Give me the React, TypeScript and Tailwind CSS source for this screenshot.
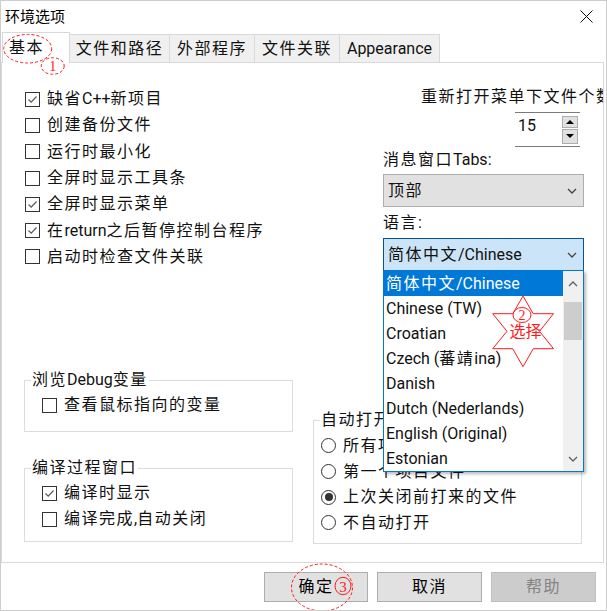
import type { FC, ReactNode } from 'react';

const CJK = /([\u2E80-\u9FFF\uF900-\uFAFF\uFF00-\uFFEF]+)/;

// CJK runs get a little extra spacing, Latin runs stay as they are
const T: FC<{ s: string }> = ({ s }) => (
  <span>
    {s.split(CJK).map((p, i) =>
      CJK.test(p) ? (
        <span key={i} className="tracking-[1.5px]">
          {p}
        </span>
      ) : (
        p
      ),
    )}
  </span>
);

const Check: FC<{ checked?: boolean }> = ({ checked }) => (
  <span className="w-[15px] h-[15px] shrink-0 border border-[#333] bg-white flex items-center justify-center">
    {checked && (
      <svg width="11" height="11" viewBox="0 0 11 11">
        <path d="M1.5 5.5 L4.2 8.2 L9.5 2.5" fill="none" stroke="#5a5a5a" strokeWidth="1.2" />
      </svg>
    )}
  </span>
);

const CheckRow: FC<{ label: string; checked?: boolean; h?: string }> = ({ label, checked, h = 'h-[26.3px]' }) => (
  <div className={`flex items-center gap-[7px] whitespace-nowrap ${h}`}>
    <Check checked={checked} />
    <T s={label} />
  </div>
);

const RadioRow: FC<{ label: string; checked?: boolean }> = ({ label, checked }) => (
  <div className="flex items-center gap-[7px] h-[25.7px] whitespace-nowrap">
    <span className="w-[15px] h-[15px] shrink-0 rounded-full border border-[#333] bg-white flex items-center justify-center">
      {checked && <span className="w-[8px] h-[8px] rounded-full bg-[#333]" />}
    </span>
    <T s={label} />
  </div>
);

const Chevron: FC<{ up?: boolean; color?: string }> = ({ up, color = '#444' }) => (
  <svg width="10" height="6" viewBox="0 0 10 6">
    <path d={up ? 'M1 5 L5 1 L9 5' : 'M1 1 L5 5 L9 1'} fill="none" stroke={color} strokeWidth="1.3" />
  </svg>
);

const Group: FC<{ legend: string; className: string; children: ReactNode }> = ({ legend, className, children }) => (
  <fieldset className={`border border-[#dcdcdc] ${className}`}>
    <legend className="ml-[6px] px-[1px] leading-[20px] whitespace-nowrap">
      <T s={legend} />
    </legend>
    {children}
  </fieldset>
);

const languages = [
  '简体中文/Chinese',
  'Chinese (TW)',
  'Croatian',
  'Czech (蕃靖ina)',
  'Danish',
  'Dutch (Nederlands)',
  'English (Original)',
  'Estonian',
];

const tabs = [
  { label: '文件和路径', w: 'w-[100px]' },
  { label: '外部程序', w: 'w-[85px]' },
  { label: '文件关联', w: 'w-[85px]' },
  { label: 'Appearance', w: 'w-[100px]' },
];

export default function App() {
  return (
    <div className="relative w-[607px] h-[611px] overflow-hidden bg-white border border-[#cdcdcd] flex flex-col text-[16px] leading-[26px] text-[#111] font-['Roboto','Noto_Sans_CJK_SC',sans-serif]">
      {/* Title bar */}
      <div className="h-[31px] shrink-0 flex items-center justify-between pl-[4px] pr-[13px]">
        <span className="text-[15px] text-black">环境选项</span>
        <svg width="13" height="13" viewBox="0 0 13 13">
          <path d="M0.5 0.5 L12.5 12.5 M12.5 0.5 L0.5 12.5" stroke="#111" strokeWidth="1" />
        </svg>
      </div>

      {/* Tabs */}
      <div className="h-[30px] shrink-0 flex items-end pl-[1px]">
        <div className="relative z-10 -mb-px w-[68px] h-[31px] border border-b-0 border-[#d9d9d9] bg-white flex items-center pl-[6px]">
          <T s="基本" />
        </div>
        {tabs.map((t) => (
          <div
            key={t.label}
            className={`${t.w} h-[28px] border-t border-r border-[#d9d9d9] bg-[#f0f0f0] flex items-center justify-center whitespace-nowrap`}
          >
            <T s={t.label} />
          </div>
        ))}
      </div>

      {/* Tab page */}
      <div className="w-[603px] h-[501px] shrink-0 border border-[#d9d9d9] flex pl-[22px] gap-[20px] overflow-hidden">
        {/* Left column */}
        <div className="w-[269px] shrink-0 flex flex-col pt-[23px]">
          <div className="pl-[1px]">
            <CheckRow label="缺省C++新项目" checked />
            <CheckRow label="创建备份文件" />
            <CheckRow label="运行时最小化" />
            <CheckRow label="全屏时显示工具条" />
            <CheckRow label="全屏时显示菜单" checked />
            <CheckRow label="在return之后暂停控制台程序" checked />
            <CheckRow label="启动时检查文件关联" />
          </div>

          <Group legend="浏览Debug变量" className="mt-[100px] pb-[13px]">
            <div className="mt-[2px] pl-[17px]">
              <CheckRow label="查看鼠标指向的变量" h="h-[26px]" />
            </div>
          </Group>

          <Group legend="编译过程窗口" className="mt-[26px] pb-[9px]">
            <div className="mt-[2px] pl-[17px]">
              <CheckRow label="编译时显示" checked h="h-[26px]" />
              <CheckRow label="编译完成,自动关闭" h="h-[26px]" />
            </div>
          </Group>
        </div>

        {/* Right column */}
        <div className="flex-1 min-w-0 flex flex-col pt-[21px]">
          <div className="pl-[108px] whitespace-nowrap overflow-hidden">
            <T s="重新打开菜单下文件个数" />
          </div>

          <div className="ml-[202px] mt-[2px] w-[65px] h-[35px] border-y border-[#7a7a7a] flex items-center justify-between pl-[3px] pr-[2px]">
            <span className="self-start">15</span>
            <div className="flex flex-col gap-[1px]">
              <div className="w-[16px] h-[12px] border border-[#adadad] bg-[#e1e1e1] flex items-center justify-center">
                <svg width="8" height="4" viewBox="0 0 8 4">
                  <path d="M0 4 L4 0 L8 4 Z" fill="#000" />
                </svg>
              </div>
              <div className="w-[16px] h-[15px] border border-[#adadad] bg-[#e1e1e1] flex items-center justify-center">
                <svg width="8" height="4" viewBox="0 0 8 4">
                  <path d="M0 0 L4 4 L8 0 Z" fill="#000" />
                </svg>
              </div>
            </div>
          </div>

          <div className="ml-[70px] whitespace-nowrap">
            <T s="消息窗口Tabs:" />
          </div>
          <div className="ml-[70px] mt-[1px] w-[201px] h-[33px] border border-[#adadad] bg-[#e1e1e1] flex items-center justify-between pl-[4px] pr-[6px]">
            <T s="顶部" />
            <Chevron />
          </div>

          <div className="ml-[70px] mt-[3px]">
            <T s="语言:" />
          </div>
          <div className="relative z-10 ml-[70px] mt-[2px] w-[201px]">
            <div className="h-[33px] border border-[#005499] bg-[#cce4f7] flex items-center justify-between pl-[4px] pr-[6px] whitespace-nowrap">
              <T s="简体中文/Chinese" />
              <Chevron />
            </div>
            {/* Open dropdown list */}
            <div className="absolute left-0 top-full -mt-px w-[201px] h-[202px] border border-[#0078d7] bg-white flex shadow-[2px_2px_3px_rgba(0,0,0,0.28)]">
              <div className="flex-1 flex flex-col">
                {languages.map((l, i) => (
                  <div
                    key={l}
                    className={`h-[25px] leading-[25px] pl-[2px] whitespace-nowrap ${i === 0 ? 'bg-[#0078d7] text-white' : ''}`}
                  >
                    <T s={l} />
                  </div>
                ))}
              </div>
              <div className="w-[20px] bg-[#f0f0f0] flex flex-col">
                <div className="h-[25px] flex items-center justify-center">
                  <Chevron up color="#606060" />
                </div>
                <div className="flex-1 px-[1px] pt-[6px]">
                  <div className="h-[38px] bg-[#cdcdcd]" />
                </div>
                <div className="h-[25px] flex items-center justify-center">
                  <Chevron color="#606060" />
                </div>
              </div>
            </div>
          </div>

          <Group legend="自动打开" className="mt-[139px] w-[269px] pb-[7px]">
            <div className="mt-[3px] pl-[7px]">
              <RadioRow label="所有项目文件" />
              <RadioRow label="第一个项目文件" />
              <RadioRow label="上次关闭前打来的文件" checked />
              <RadioRow label="不自动打开" />
            </div>
          </Group>
        </div>
      </div>

      {/* Buttons */}
      <div className="flex-1 flex items-start justify-end gap-[9px] pt-[9px] pr-[10px]">
        <button className="w-[104px] h-[30px] border border-[#adadad] bg-[#e1e1e1] text-black">
          <T s="确定" />
        </button>
        <button className="w-[105px] h-[30px] border border-[#adadad] bg-[#e1e1e1] text-black">
          <T s="取消" />
        </button>
        <button className="w-[105px] h-[30px] border border-[#bfbfbf] bg-[#cccccc] text-[#838383]">
          <T s="帮助" />
        </button>
      </div>

      {/* Red annotations drawn over the dialog */}
      <svg className="absolute left-0 top-0 pointer-events-none z-20" width="607" height="611" viewBox="0 0 607 611">
        <g fill="none" stroke="#ff1a1a" strokeWidth="1">
          <ellipse cx="26.7" cy="47.7" rx="24" ry="14.3" strokeDasharray="3 2" />
          <ellipse cx="51.7" cy="65" rx="11.5" ry="8.3" strokeDasharray="3 2" />
          <polygon points="522,295 532.2,312.7 552.5,312.7 538.5,330.3 552.5,347.7 532.3,347.7 522,365.7 511.7,347.7 491.7,347.7 506,330.3 491.7,312.7 511.8,312.7" />
          <ellipse cx="521" cy="314" rx="9" ry="7.5" />
          <ellipse cx="321" cy="586.5" rx="30.5" ry="23.5" strokeDasharray="3 2" />
          <ellipse cx="342" cy="585" rx="8" ry="8.7" />
        </g>
        <g fill="#ff1a1a" fontFamily="'Liberation Serif', serif" textAnchor="middle">
          <text x="51.7" y="70" fontSize="14">1</text>
          <text x="521" y="319" fontSize="14">2</text>
          <text x="342" y="590.5" fontSize="15">3</text>
          <text x="524.5" y="336" fontSize="16" fontFamily="'Noto Sans CJK SC', sans-serif">
            选择
          </text>
        </g>
      </svg>
    </div>
  );
}
